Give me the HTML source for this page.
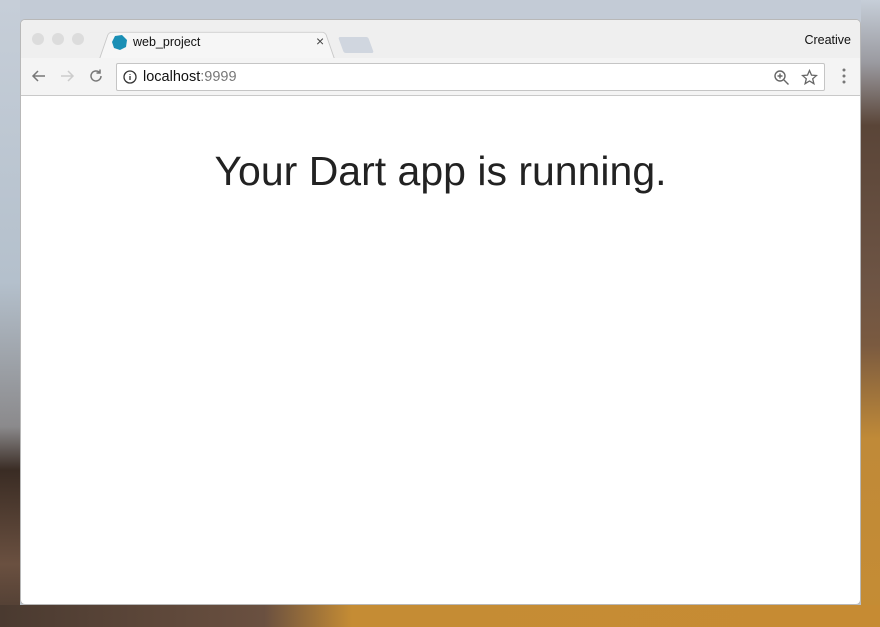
<!DOCTYPE html>
<html><head><style>
*{margin:0;padding:0;box-sizing:border-box}
html,body{width:880px;height:627px;}
body{overflow:hidden;position:relative;font-family:"Liberation Sans",sans-serif;
background:linear-gradient(180deg,#c3cbd6 0%,#c5ccd6 60%,#b9c2cc 100%);}
.bgL{position:absolute;left:0;top:0;width:20px;height:627px;background:linear-gradient(180deg,#c6ced8 0%,#b4c0cc 45%,#8b8a8c 68%,#3a2c24 75%,#6a5040 90%,#4a3a30 100%)}
.bgR{position:absolute;right:0;top:0;width:19px;height:627px;background:linear-gradient(180deg,#c6ced8 0%,#9a9aa0 10%,#5a4538 20%,#6d5444 45%,#7a5a40 55%,#c08a38 70%,#c58c34 100%)}
.bgB{position:absolute;left:0;top:605px;width:880px;height:22px;background:linear-gradient(90deg,#4a3a30 0%,#5a4538 15%,#6a5040 30%,#c58c34 40%,#c68b33 100%)}
.win{position:absolute;left:20px;top:19px;width:841px;height:586px;border-radius:5px;background:#fff;overflow:hidden;border:1px solid #b8b8b8}
.title{position:absolute;left:0;top:0;width:100%;height:38px;background:#efefef}
.tool{position:absolute;left:0;top:38px;width:100%;height:38px;background:#f4f4f4;border-bottom:1px solid #c9c9c9}
.dot{position:absolute;top:13px;width:12px;height:12px;border-radius:50%;background:#dcdcdc}
.tab{position:absolute;left:78px;top:9px;width:236px;height:30px;background:#f6f6f6;border:1px solid #c8c8c8;border-bottom:none;border-radius:4px 4px 0 0;transform:perspective(60px) rotateX(10deg);transform-origin:bottom}
.newtab{position:absolute;left:320px;top:17px;width:30px;height:16px;background:#d0d6df;transform:skewX(20deg);border-radius:2px}
.url{position:absolute;left:95px;top:5px;width:709px;height:28px;background:#fff;border:1px solid #c5c5c5;border-radius:2px}
</style></head><body>
<div class="bgL"></div><div class="bgR"></div><div class="bgB"></div>
<div class="win">
 <div class="title">
  <div class="dot" style="left:11px"></div><div class="dot" style="left:31px"></div><div class="dot" style="left:51px"></div>
  <div class="tab"></div>
  <svg style="position:absolute;left:90px;top:14px" width="17" height="17" viewBox="0 0 17 17"><path d="M4 2 L11 1 L16 6 L15 13 L9 16 L3 14 L1 8 Z" fill="#1a8fb5"/></svg>
  <div style="position:absolute;left:112px;top:15px;font-size:12.5px;color:#111">web_project</div>
  <div style="position:absolute;left:295px;top:13px;font-size:14px;color:#444">×</div>
  <div class="newtab"></div>
  <div style="position:absolute;right:9px;top:13px;font-size:12.5px;color:#111">Creative</div>
 </div>
 <div class="tool">
  <svg style="position:absolute;left:9px;top:9px" width="18" height="18" viewBox="0 0 18 18" fill="none" stroke="#777" stroke-width="1.5"><path d="M15 9H3M8 4L3 9l5 5"/></svg>
  <svg style="position:absolute;left:37px;top:9px" width="18" height="18" viewBox="0 0 18 18" fill="none" stroke="#ccc" stroke-width="1.5"><path d="M3 9h12M10 4l5 5-5 5"/></svg>
  <svg style="position:absolute;left:66px;top:9px" width="18" height="18" viewBox="0 0 18 18" fill="none" stroke="#777" stroke-width="1.5"><path d="M14 9a5 5 0 1 1-1.5-3.6M13 2.5v3.5h-3.5"/></svg>
  <div class="url">
   <svg style="position:absolute;left:6px;top:6px" width="14" height="14" viewBox="0 0 14 14" fill="none" stroke="#333" stroke-width="1.3"><circle cx="7" cy="7" r="6"/><path d="M7 6v4M7 4v.8"/></svg>
   <div style="position:absolute;left:26px;top:5px;font-size:14.5px;color:#111">localhost<span style="color:#777">:9999</span></div>
   <svg style="position:absolute;right:34px;top:5px" width="17" height="17" viewBox="0 0 17 17" fill="none" stroke="#666" stroke-width="1.4"><circle cx="7" cy="7" r="5"/><path d="M11 11l4.5 4.5M7 4.5v5M4.5 7h5"/></svg>
   <svg style="position:absolute;right:6px;top:5px" width="17" height="17" viewBox="0 0 17 17" fill="none" stroke="#666" stroke-width="1.3"><path d="M8.5 1.5l2 4.6 5 .4-3.8 3.3 1.2 4.9-4.4-2.7-4.4 2.7 1.2-4.9L1.5 6.5l5-.4z"/></svg>
  </div>
  <svg style="position:absolute;right:14px;top:10px" width="4" height="16" viewBox="0 0 4 16" fill="#777"><circle cx="2" cy="2" r="1.5"/><circle cx="2" cy="8" r="1.5"/><circle cx="2" cy="14" r="1.5"/></svg>
 </div>
 <div style="position:absolute;left:0;top:128px;width:100%;text-align:center;font-size:41px;color:#222">Your Dart app is running.</div>
</div>
</body></html>
